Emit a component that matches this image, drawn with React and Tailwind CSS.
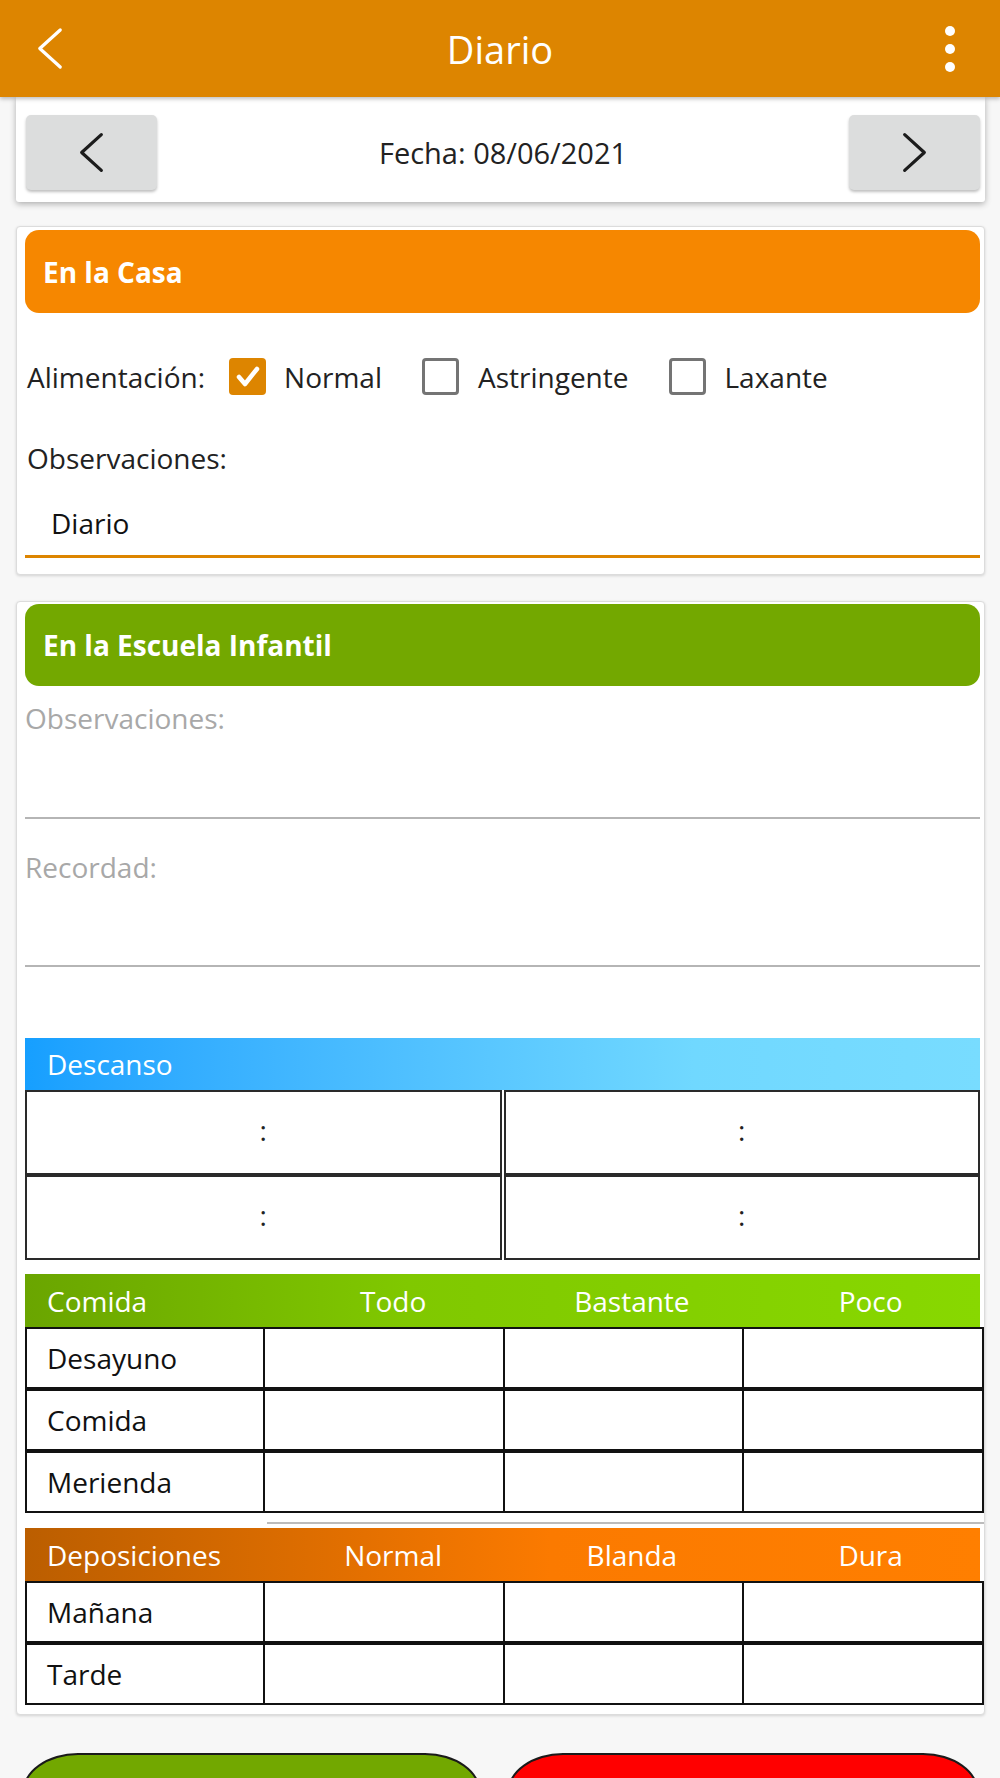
import React from 'react';

function Chevron({ dir = 'left', className, width = 3.5 }) {
  return (
    <svg viewBox="0 0 28 44" className={className} fill="none" stroke="currentColor" strokeWidth={width} strokeLinecap="round" strokeLinejoin="round">
      {dir === 'left' ? <path d="M25 2 L3 22 L25 42" /> : <path d="M3 2 L25 22 L3 42" />}
    </svg>
  );
}

function Checkbox({ checked }) {
  if (checked) {
    return (
      <span className="w-[37px] h-[37px] rounded-[4px] bg-[#dd8500] flex items-center justify-center shrink-0">
        <svg viewBox="0 0 37 37" className="w-[37px] h-[37px]" fill="none" stroke="white" strokeWidth="4.5" strokeLinecap="round" strokeLinejoin="round">
          <path d="M10 19 L16 26 L28 11" />
        </svg>
      </span>
    );
  }
  return <span className="block w-[37px] h-[37px] rounded-[4px] border-[3px] border-[#747474] shrink-0" />;
}

function MealTable({ title, cols, rows, gradient }) {
  return (
    <div>
      <div className={`grid grid-cols-4 items-center h-[53px] text-white text-[28px] ${gradient}`}>
        <span className="pl-[22px]">{title}</span>
        {cols.map((c) => (
          <span key={c} className="text-center pl-[20px]">{c}</span>
        ))}
      </div>
      <div className="-mr-[4px]">
        {rows.map((r) => (
          <div key={r} className="grid grid-cols-4 h-[62px]">
            <div className="border-2 border-[#111] flex items-center pl-[20px] text-[28px] text-[#111]">{r}</div>
            <div className="border-2 border-l-0 border-[#111]" />
            <div className="border-2 border-l-0 border-[#111]" />
            <div className="border-2 border-l-0 border-[#111]" />
          </div>
        ))}
      </div>
    </div>
  );
}

export default function App() {
  return (
    <div className="w-full min-h-[1778px] bg-[#f7f7f7] font-['Open_Sans',sans-serif] text-[#222] overflow-hidden">
      {/* Top bar */}
      <header className="relative z-10 h-[97px] bg-[#dd8500] flex items-center shadow-[0_2px_4px_rgba(0,0,0,0.25)]">
        <div className="w-[100px] pl-[37px]">
          <Chevron className="w-[26px] h-[43px] text-white" width={3.5} />
        </div>
        <h1 className="flex-1 text-center text-white text-[38px] leading-none">Diario</h1>
        <div className="w-[100px] flex justify-end pr-[45px]">
          <div className="flex flex-col gap-[8px]">
            <span className="w-[10px] h-[10px] rounded-full bg-white" />
            <span className="w-[10px] h-[10px] rounded-full bg-white" />
            <span className="w-[10px] h-[10px] rounded-full bg-white" />
          </div>
        </div>
      </header>

      {/* Date selector */}
      <div className="ml-[16px] mr-[15px] bg-white rounded-b-[3px] shadow-[0_2px_6px_rgba(0,0,0,0.3)] flex items-center pt-[18px] pb-[12px] pl-[10px] pr-[5px]">
        <button className="w-[131px] h-[75px] rounded-[5px] bg-[#dcdddd] shadow-[0_2px_3px_rgba(0,0,0,0.25)] flex items-center justify-center">
          <Chevron className="w-[25px] h-[41px] text-[#1c1c1c]" width={3.6} />
        </button>
        <div className="flex-1 text-center text-[29px]">Fecha: 08/06/2021</div>
        <button className="w-[131px] h-[75px] rounded-[5px] bg-[#dcdddd] shadow-[0_2px_3px_rgba(0,0,0,0.25)] flex items-center justify-center">
          <Chevron dir="right" className="w-[25px] h-[41px] text-[#1c1c1c]" width={3.6} />
        </button>
      </div>

      {/* En la Casa */}
      <section className="mt-[24px] ml-[16px] mr-[15px] bg-white border border-[#dcdcdc] rounded-[4px] shadow-[0_1px_3px_rgba(0,0,0,0.15)] pt-[3px] pb-[16px] pl-[8px] pr-[4px]">
        <div className="h-[83px] rounded-[14px] bg-[#f68700] flex items-center pl-[18px] text-white text-[28px] font-bold">
          En la Casa
        </div>
        <div className="mt-[45px] h-[37px] flex items-center text-[28px] pl-[2px]">
          <span>Alimentación:</span>
          <span className="ml-[24px]"><Checkbox checked /></span>
          <span className="ml-[18px]">Normal</span>
          <span className="ml-[40px]"><Checkbox /></span>
          <span className="ml-[19px]">Astringente</span>
          <span className="ml-[40px]"><Checkbox /></span>
          <span className="ml-[19px]">Laxante</span>
        </div>
        <div className="mt-[44px] pl-[2px] text-[28px] leading-[38px]">Observaciones:</div>
        <div className="mt-[27px] h-[54px] border-b-[3px] border-[#dd8500] pl-[26px] text-[28px] leading-[38px] text-[#111]">Diario</div>
      </section>

      {/* En la Escuela Infantil */}
      <section className="mt-[26px] ml-[16px] mr-[15px] bg-white border border-[#dcdcdc] rounded-[4px] shadow-[0_1px_3px_rgba(0,0,0,0.15)] pt-[2px] pb-[9px] pl-[8px] pr-[4px]">
        <div className="h-[82px] rounded-[14px] bg-[#73a800] flex items-center pl-[18px] text-white text-[28px] font-bold">
          En la Escuela Infantil
        </div>
        <div className="mt-[13px] text-[28px] leading-[38px] text-[#a8a8a8]">Observaciones:</div>
        <div className="h-[82px] border-b-2 border-[#b5b5b5]" />
        <div className="mt-[29px] text-[28px] leading-[38px] text-[#a8a8a8]">Recordad:</div>
        <div className="h-[81px] border-b-2 border-[#b5b5b5]" />

        {/* Descanso */}
        <div className="mt-[71px]">
          <div className="h-[52px] flex items-center pl-[22px] text-white text-[28px] bg-linear-to-r from-[#169fff] via-[#70d8ff] via-70% to-[#78dcff]">
            Descanso
          </div>
          <div className="grid grid-cols-2 gap-x-[2px]">
            {[0, 1, 2, 3].map((i) => (
              <div key={i} className="h-[85px] border-2 border-[#2a2a2a] flex items-center justify-center text-[28px] pb-[6px]">:</div>
            ))}
          </div>
        </div>

        <div className="mt-[14px]">
          <MealTable
            title="Comida"
            cols={['Todo', 'Bastante', 'Poco']}
            rows={['Desayuno', 'Comida', 'Merienda']}
            gradient="bg-linear-to-r from-[#6aa500] via-[#80c800] via-40% to-[#88d800]"
          />
        </div>
        <div className="mt-[9px] ml-[242px] -mr-[4px] h-[2px] bg-[#bcbcbc]" />
        <div className="mt-[4px]">
          <MealTable
            title="Deposiciones"
            cols={['Normal', 'Blanda', 'Dura']}
            rows={['Mañana', 'Tarde']}
            gradient="bg-linear-to-r from-[#bb5e00] via-[#fb7a00] via-55% to-[#ff7f00]"
          />
        </div>
      </section>

      {/* Bottom buttons */}
      <div className="mt-[38px] flex gap-[26px] pl-[22px] pr-[21px]">
        <button className="w-[459px] h-[100px] bg-[#72a800] border-2 border-[#1a1a1a] rounded-tl-[56px_40px] rounded-tr-[56px_40px]" />
        <button className="flex-1 h-[100px] bg-[#ff0000] border-2 border-[#1a1a1a] rounded-tl-[56px_40px] rounded-tr-[56px_40px]" />
      </div>
    </div>
  );
}
